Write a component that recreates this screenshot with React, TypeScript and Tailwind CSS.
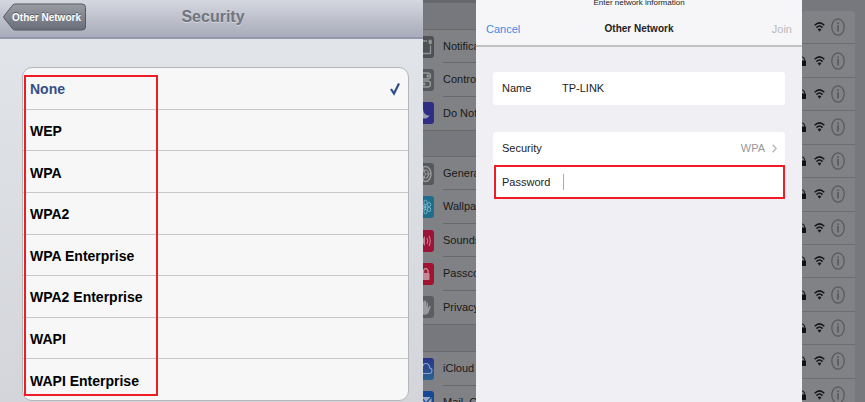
import type { ReactNode } from 'react';

const securityOptions = [
  'None',
  'WEP',
  'WPA',
  'WPA2',
  'WPA Enterprise',
  'WPA2 Enterprise',
  'WAPI',
  'WAPI Enterprise'
];

// Settings icons are cut off by the left edge of the panel
const icons: Record<string, ReactNode> = {
  notifications: (
    <>
      <rect x="-6" width="17" height="22" rx="3" fill="#4f5053" />
      <path d="M-1 5H4M7.5 9.500v8H-1" fill="none" stroke="#929396" strokeWidth="1.3" />
      <ellipse cx="7.2" cy="6" rx="1.8" ry="2.4" fill="#929396" />
    </>
  ),
  control: (
    <>
      <rect x="-6" width="17" height="22" rx="3" fill="#57585b" />
      <rect x="-2" y="4" width="9.5" height="6" rx="3" fill="none" stroke="#97989b" strokeWidth="1.4" />
      <rect x="-2" y="12" width="9.5" height="6" rx="3" fill="none" stroke="#97989b" strokeWidth="1.4" />
      <circle cx="5" cy="7" r="1.6" fill="#97989b" />
      <circle cx="1" cy="15" r="1.6" fill="#97989b" />
    </>
  ),
  moon: (
    <>
      <rect x="-6" width="17" height="22" rx="3" fill="#2e2e85" />
      <path d="M0 6c0 5 2.500 7.500 6.500 7.500C5 17-1 18-3 14z" fill="#9b9cb8" />
    </>
  ),
  general: (
    <>
      <rect x="-6" width="17" height="22" rx="3" fill="#57585b" />
      <ellipse cx="2.500" cy="11" rx="5.500" ry="7.500" fill="none" stroke="#97989b" strokeWidth="1.500" />
      <ellipse cx="2.500" cy="11" rx="3" ry="4" fill="none" stroke="#97989b" strokeWidth="1.200" />
      <path d="M2.500 11h5M2.500 11L0 5M2.500 11L0 17" stroke="#97989b" />
    </>
  ),
  wallpaper: (
    <>
      <rect x="-6" width="17" height="22" rx="3" fill="#1d6d8c" />
      <g fill="none" stroke="#78b0c4" strokeWidth="1">
        <ellipse cx="2.500" cy="6.500" rx="1.600" ry="2.500" />
        <ellipse cx="2.500" cy="15.500" rx="1.600" ry="2.500" />
        <ellipse cx="6" cy="8.500" rx="1.700" ry="2" />
        <ellipse cx="6" cy="13.500" rx="1.700" ry="2" />
        <ellipse cx="-0.500" cy="11" rx="2" ry="2" />
        <path d="M2.500 8v6M0 11h7" />
      </g>
    </>
  ),
  sounds: (
    <>
      <rect x="-6" width="17" height="22" rx="3" fill="#9c1338" />
      <path d="M-2 9h1.500L2 6v10l-2.500-3H-2z" fill="#c1808f" />
      <path d="M4 8q1.500 3 0 6M6 6q2.500 5 0 10" fill="none" stroke="#c1808f" strokeWidth="1.100" />
    </>
  ),
  passcode: (
    <>
      <rect x="-6" width="17" height="22" rx="3" fill="#a01432" />
      <rect x="-1" y="10" width="7.500" height="7" rx="1" fill="#c08a95" />
      <path d="M0.500 10V7.500q2.200-4 4.500 0V10" fill="none" stroke="#c08a95" strokeWidth="1.400" />
    </>
  ),
  privacy: (
    <>
      <rect x="-6" width="17" height="22" rx="3" fill="#5c5d60" />
      <path
        d="M-1 11V6.500q.7-1 1.400 0V10 5q.7-1 1.400 0V10 5q.7-1 1.400 0V11l.6-4q1-.8 1.200 0V12l1.500-2q1.300-.5 1.200.5L5.500 17q-2 2.500-5.500 1.500z"
        fill="#98999c"
      />
    </>
  ),
  icloud: (
    <>
      <defs>
        <linearGradient id="cloud" x1="0" y1="0" x2="0" y2="1">
          <stop offset="0" stopColor="#26348a" />
          <stop offset="1" stopColor="#2b6494" />
        </linearGradient>
      </defs>
      <rect x="-6" width="17" height="22" rx="3" fill="url(#cloud)" />
      <path d="M-2 15.500H7q2-.5 2-2.800T6.800 10Q6 5.500 3 5.500T-.5 9" fill="none" stroke="#8ea3c6" strokeWidth="1.100" />
    </>
  ),
  mail: (
    <>
      <rect x="-6" width="17" height="22" rx="3" fill="#174893" />
      <path d="M-2 6H8.500V16H-2z" fill="#9aabc2" />
      <path d="M-2 6L3 12 8.500 6" fill="none" stroke="#174893" strokeWidth="1.200" />
    </>
  )
};

type SettingsItem = { label: string; icon: string };

const notificationItems: SettingsItem[] = [
  { label: 'Notifica', icon: 'notifications' },
  { label: 'Control', icon: 'control' },
  { label: 'Do Not', icon: 'moon' }
];

const generalItems: SettingsItem[] = [
  { label: 'Genera', icon: 'general' },
  { label: 'Wallpap', icon: 'wallpaper' },
  { label: 'Sounds', icon: 'sounds' },
  { label: 'Passco', icon: 'passcode' },
  { label: 'Privacy', icon: 'privacy' }
];

const accountItems: SettingsItem[] = [
  { label: 'iCloud', icon: 'icloud' },
  { label: 'Mail, C', icon: 'mail' }
];

const networks = [false, true, true, true, true, true, true, true, true, true, true, true];

function SettingsRows({ items }: { items: SettingsItem[] }) {
  return (
    <>
      {items.map((item, i) => (
        <div key={item.label} className="flex flex-1 items-center gap-[9px]">
          <svg className="h-[22px] w-[11px] shrink-0" viewBox="0 0 11 22" aria-hidden="true">
            {icons[item.icon]}
          </svg>
          <span
            className={`flex min-w-0 flex-1 items-center self-stretch whitespace-nowrap ${i < items.length - 1 ? 'border-b border-[#69696c]' : ''}`}
          >
            {item.label}
          </span>
        </div>
      ))}
    </>
  );
}

function SecurityPanel() {
  return (
    <section className="flex min-h-screen flex-col bg-linear-to-b from-[#e3e6eb] to-[#d3d5db]">
      <header className="grid h-[39px] grid-cols-[1fr_auto_1fr] items-start border-b-2 border-[#9297a9] bg-linear-to-b from-[#d5d7e0] to-[#a8abb9] pl-[3px]">
        <button className="relative mt-[3px] flex h-7 w-[83px] items-center justify-center pl-1 text-[10px] font-bold text-white [text-shadow:0_-1px_0_#555a64]">
          <svg className="absolute inset-0 h-full w-full" viewBox="0 0 83 28" aria-hidden="true">
            <defs>
              <linearGradient id="back" x1="0" y1="0" x2="0" y2="1">
                <stop offset="0" stopColor="#9b9da3" />
                <stop offset="1" stopColor="#686d79" />
              </linearGradient>
            </defs>
            <path
              d="M12 1H79q3.500 0 3.500 3.500V24q0 3-3.500 3H12q-2 0-3-2L1 15q-.6-1 0-2L9 3q1-2 3-2z"
              fill="url(#back)"
              stroke="#555961"
            />
          </svg>
          <span className="relative whitespace-nowrap">Other Network</span>
        </button>
        <h1 className="mt-[5px] text-[16px] leading-6 font-bold text-[#70757e] [text-shadow:0_1px_0_#d4d6dd]">
          Security
        </h1>
      </header>

      <div className="flex flex-1 flex-col pt-7 pr-[14px] pb-px pl-[22px]">
        <div className="relative flex flex-1 flex-col rounded-[10px] border border-[#b3b5b9] bg-[#f7f7f7]">
          {securityOptions.map((option, i) => (
            <button
              key={option}
              className={`flex flex-1 items-center justify-between pt-[3px] pr-2 pl-[7px] text-left text-[14px] font-bold ${i === 0 ? 'text-[#354f87]' : 'text-black'} ${i < securityOptions.length - 1 ? 'border-b border-[#c6c7c9]' : ''}`}
            >
              {option}
              {i === 0 && (
                <svg className="h-[14px] w-[10px]" viewBox="0 0 10 14" aria-hidden="true">
                  <path d="M1 6l3 4.500L9 .5" fill="none" stroke="#2b4c86" strokeWidth="2.200" />
                </svg>
              )}
            </button>
          ))}
          <div className="pointer-events-none absolute top-[7px] bottom-1 left-px w-[134px] border-2 border-[#ee1c24]" />
        </div>
      </div>
    </section>
  );
}

function SettingsSidebar() {
  return (
    <aside className="flex h-screen flex-col overflow-hidden bg-[#77787d] text-[11px] text-[#19191a]">
      <div className="h-[30px] shrink-0 border-t-[3px] border-b border-t-[#66676b] border-b-[#69696c]" />
      <div className="flex h-[100px] shrink-0 flex-col bg-[#808184]">
        <SettingsRows items={notificationItems} />
      </div>
      <div className="h-[27px] shrink-0 border-y border-[#69696c]" />
      <div className="flex h-[167px] shrink-0 flex-col bg-[#808184]">
        <SettingsRows items={generalItems} />
      </div>
      <div className="h-7 shrink-0 border-y border-[#69696c]" />
      <div className="flex h-[67px] shrink-0 flex-col bg-[#808184]">
        <SettingsRows items={accountItems} />
      </div>
    </aside>
  );
}

function NetworkDialog() {
  return (
    <main className="min-h-screen bg-[#efeff4] text-[11px] text-[#222224]">
      <header className="flex h-[47px] flex-col border-b-2 border-[#c3c3c6] bg-[#f6f6f8] px-[10px]">
        <p className="-mt-1 h-[14px] text-center text-[8px] leading-[14px]">Enter network information</p>
        <div className="mt-2 grid grid-cols-3 items-center leading-[22px]">
          <button className="text-left text-[#3b8be6]">Cancel</button>
          <h2 className="text-center text-[10px] font-bold whitespace-nowrap">Other Network</h2>
          <button className="text-right text-[#b9b9bd]">Join</button>
        </div>
      </header>

      <form className="flex flex-col gap-[27px] pt-[25px] pr-[17px] pl-[17px]">
        <div className="flex h-[33px] items-center rounded-[3px] bg-white pl-[9px]">
          <label htmlFor="name" className="w-[60px]">Name</label>
          <input id="name" defaultValue="TP-LINK" className="min-w-0 flex-1 outline-none" />
        </div>
        <div className="rounded-[3px] bg-white">
          <button type="button" className="flex h-[33px] w-full items-center pr-2 pl-[9px]">
            <span className="flex-1 text-left">Security</span>
            <span className="mr-[7px] text-[#98989b]">WPA</span>
            <svg className="h-[9px] w-[5px]" viewBox="0 0 5 9" aria-hidden="true">
              <path d="M.7.7L4.200 4.500.7 8.300" fill="none" stroke="#b4b4b8" strokeWidth="1.300" />
            </svg>
          </button>
          <div className="ml-px flex h-[34px] items-center border-2 border-[#ee1c24] pl-[6px]">
            <label htmlFor="password" className="w-[61px]">Password</label>
            <span className="h-4 w-px bg-[#a3a6dc]" />
            <input id="password" type="password" className="min-w-0 flex-1 outline-none" />
          </div>
        </div>
      </form>
    </main>
  );
}

function NetworkList() {
  return (
    <aside className="flex h-screen flex-col overflow-hidden bg-[#77787d] pt-[11px] pr-[10px]">
      <div className="-mb-[10px] flex flex-1 flex-col rounded-t-[3px] bg-[#818285]">
        {networks.map((locked, i) => (
          <div key={i} className="flex flex-1 items-center border-b border-[#6d6e71]">
            <svg className="h-[10px] w-1" viewBox="0 0 4 10" aria-hidden="true">
              {locked && (
                <>
                  <rect x="-4" y="4.500" width="8" height="5.500" rx=".5" fill="#111" />
                  <path d="M-2 5V3Q.5-1 2.500 3V5" fill="none" stroke="#222" strokeWidth="1.200" />
                </>
              )}
            </svg>
            <svg className="ml-2 h-[10px] w-[11px]" viewBox="0 0 11 10" aria-hidden="true">
              <g fill="none" stroke="#161617" strokeWidth="1.500">
                <path d="M.7 3.200Q5.500-1.400 10.300 3.200" />
                <path d="M2.500 5.600Q5.500 2.600 8.500 5.600" />
              </g>
              <path d="M3.600 7.300Q5.500 5.700 7.400 7.300L5.500 9.800z" fill="#161617" />
            </svg>
            <svg className="ml-[6px] h-[18px] w-[14px]" viewBox="0 0 14 18" aria-hidden="true">
              <ellipse cx="7" cy="9" rx="6.200" ry="8.200" fill="none" stroke="#57585b" strokeWidth="1.200" />
              <path d="M7 4.500v1.500M7 7v6.500" stroke="#505154" strokeWidth="1.400" />
            </svg>
          </div>
        ))}
      </div>
    </aside>
  );
}

export default function App() {
  return (
    <div className="grid min-h-screen grid-cols-[423fr_53fr_326fr_63fr] font-['Liberation_Sans',Arial,sans-serif]">
      <SecurityPanel />
      <SettingsSidebar />
      <NetworkDialog />
      <NetworkList />
    </div>
  );
}
